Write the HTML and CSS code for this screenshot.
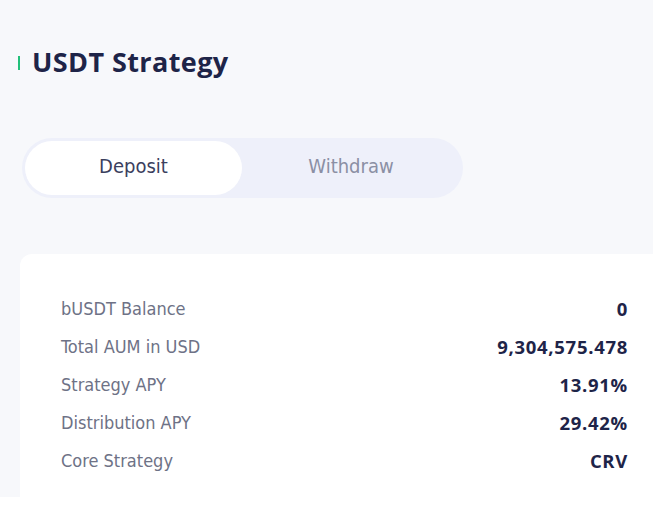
FILE: index.html
```html
<!DOCTYPE html>
<html>
<head>
<meta charset="utf-8">
<link rel="stylesheet" href="styles.css">
</head>
<body>
<div class="page">
  <h1 class="title"><span class="bar"></span>USDT Strategy</h1>
  <div class="tabs">
    <div class="tab active">Deposit</div>
    <div class="tab">Withdraw</div>
  </div>
  <div class="card">
    <div class="row"><span class="label">bUSDT Balance</span><span class="value">0</span></div>
    <div class="row"><span class="label">Total AUM in USD</span><span class="value">9,304,575.478</span></div>
    <div class="row"><span class="label">Strategy APY</span><span class="value">13.91%</span></div>
    <div class="row"><span class="label">Distribution APY</span><span class="value">29.42%</span></div>
    <div class="row"><span class="label">Core Strategy</span><span class="value">CRV</span></div>
  </div>
</div>
</body>
</html>
```

FILE: styles.css
```css
html, body {
  margin: 0;
  padding: 0;
  background: #ffffff;
}
.page {
  background: #f7f8fb;
  height: 497px;
  padding: 42px 0 0 18px;
  box-sizing: border-box;
  overflow: hidden;
}
.title {
  margin: 0;
  display: flex;
  align-items: center;
  font-family: "Open Sans", sans-serif;
  font-weight: 700;
  font-size: 27px;
  line-height: 40px;
  color: #1e2448;
  letter-spacing: 0.4px;
}
.bar {
  width: 2px;
  height: 14px;
  background: #22c07a;
  margin-right: 12px;
  margin-top: 2px;
}
.tabs {
  margin-top: 56px;
  margin-left: 4px;
  width: 441px;
  height: 60px;
  box-sizing: border-box;
  padding: 3px;
  background: #eef0fa;
  border-radius: 30px;
  display: flex;
}
.tab {
  flex: 1;
  display: flex;
  align-items: center;
  justify-content: center;
  font-family: "DejaVu Sans Condensed", "DejaVu Sans", sans-serif;
  font-size: 20px;
  line-height: 24px;
  padding-bottom: 4px;
  box-sizing: border-box;
  color: #8b8fa4;
  border-radius: 27px;
}
.tab.active {
  flex: 0 0 217px;
  background: #ffffff;
  color: #3b3f5e;
  height: 54px;
}
.card {
  margin-top: 56px;
  margin-left: 2px;
  background: #ffffff;
  border-radius: 12px 0 0 0;
  height: 243px;
  box-sizing: border-box;
  padding: 35px 25px 0 41px;
}
.row {
  display: flex;
  justify-content: space-between;
  align-items: center;
  height: 38px;
}
.label {
  font-family: "DejaVu Sans Condensed", "DejaVu Sans", sans-serif;
  font-size: 18px;
  color: #6e7286;
}
.value {
  font-family: "Open Sans", sans-serif;
  font-weight: 700;
  font-size: 18.5px;
  letter-spacing: 0.7px;
  color: #1e2448;
}
```
